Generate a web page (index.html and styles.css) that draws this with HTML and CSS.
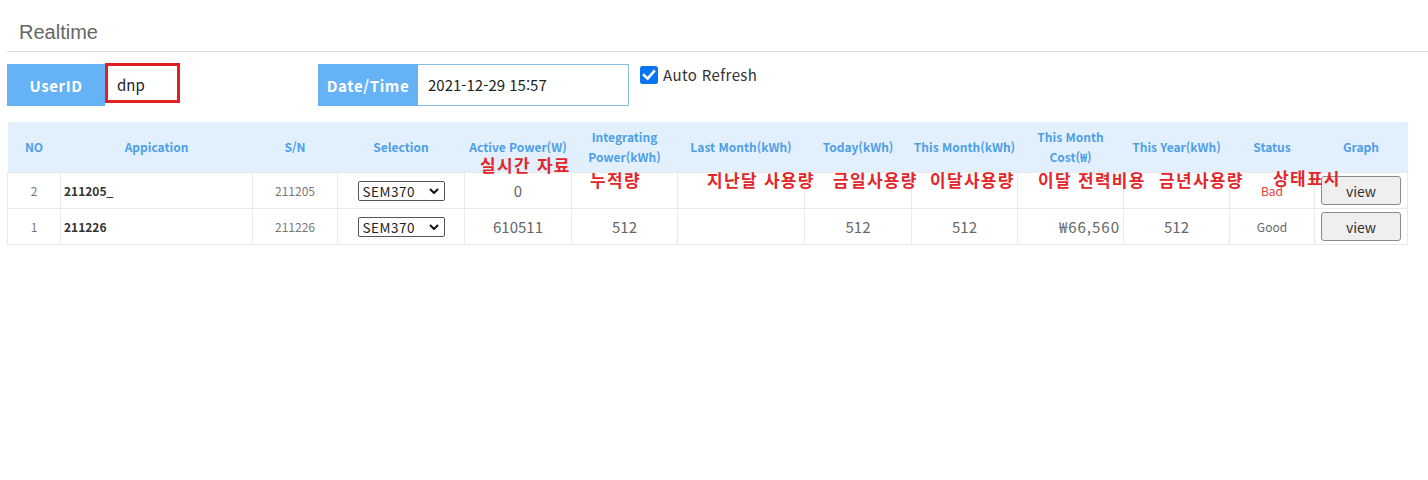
FILE: index.html
```html
<!DOCTYPE html>
<html lang="ko">
<head>
<meta charset="utf-8">
<title>Realtime</title>
<link rel="stylesheet" href="styles.css">
</head>
<body>
<div class="page">
  <h2 class="title">Realtime</h2>
  <div class="toolbar">
    <div class="field">
      <label class="lbl lbl-user">UserID</label>
      <div class="inp inp-user">dnp</div>
      <label class="lbl lbl-date">Date/Time</label>
      <div class="inp inp-date">2021-12-29 15:57</div>
    </div>
    <label class="auto"><span class="chk"><svg viewBox="0 0 18 18" width="18" height="18"><rect x="0" y="0" width="18" height="18" rx="2.5" fill="#0b74f0"/><path d="M4 9.2 L7.6 12.6 L14 5.4" fill="none" stroke="#fff" stroke-width="2.6" stroke-linecap="square"/></svg></span>Auto Refresh</label>
    <div class="mark-box"></div>
  </div>
  <div class="table-wrap">
    <table class="grid">
      <colgroup>
        <col style="width:53px"><col style="width:192px"><col style="width:85px"><col style="width:127px">
        <col style="width:107px"><col style="width:106px"><col style="width:127px"><col style="width:107px">
        <col style="width:106px"><col style="width:106px"><col style="width:106px"><col style="width:85px"><col style="width:93px">
      </colgroup>
      <thead>
        <tr>
          <th>NO</th><th>Appication</th><th>S/N</th><th>Selection</th><th>Active Power(W)</th>
          <th>Integrating<br>Power(kWh)</th><th>Last Month(kWh)</th><th>Today(kWh)</th><th>This Month(kWh)</th>
          <th>This Month<br>Cost(₩)</th><th>This Year(kWh)</th><th>Status</th><th>Graph</th>
        </tr>
      </thead>
      <tbody>
        <tr class="r1">
          <td class="no">2</td><td class="app">211205_</td><td class="sn">211205</td>
          <td class="sel"><span class="select">SEM370<svg viewBox="0 0 10 6" width="10" height="6"><path d="M1 1 L5 5 L9 1" fill="none" stroke="#111" stroke-width="2"/></svg></span></td>
          <td class="num">0</td><td class="num"></td><td class="num"></td><td class="num"></td><td class="num"></td>
          <td class="num cost"></td><td class="num"></td><td class="st bad">Bad</td>
          <td class="gr"><span class="btn">view</span></td>
        </tr>
        <tr class="r2">
          <td class="no">1</td><td class="app">211226</td><td class="sn">211226</td>
          <td class="sel"><span class="select">SEM370<svg viewBox="0 0 10 6" width="10" height="6"><path d="M1 1 L5 5 L9 1" fill="none" stroke="#111" stroke-width="2"/></svg></span></td>
          <td class="num">610511</td><td class="num">512</td><td class="num"></td><td class="num">512</td><td class="num">512</td>
          <td class="num cost">₩66,560</td><td class="num">512</td><td class="st">Good</td>
          <td class="gr"><span class="btn">view</span></td>
        </tr>
      </tbody>
    </table>
    <span class="note n1">실시간 자료</span>
    <span class="note n2">누적량</span>
    <span class="note n3">지난달 사용량</span>
    <span class="note n4">금일사용량</span>
    <span class="note n5">이달사용량</span>
    <span class="note n6">이달 전력비용</span>
    <span class="note n7">금년사용량</span>
    <span class="note n8">상태표시</span>
  </div>
</div>
</body>
</html>
```

FILE: styles.css
```css
html, body {
  margin: 0;
  padding: 0;
  background: #fff;
}
body {
  font-family: "Noto Sans CJK JP", "Noto Sans", sans-serif;
  color: #333;
}
.page {
  padding-left: 7px;
}
.title {
  margin: 0;
  padding: 20px 12px 7px;
  font-family: "Liberation Sans", Arial, sans-serif;
  font-weight: normal;
  font-size: 20px;
  line-height: 24px;
  color: #666;
  border-bottom: 1px solid #ddd;
}
.toolbar {
  position: relative;
  display: flex;
  align-items: flex-start;
  margin-top: 12px;
}
.field {
  display: flex;
  height: 42px;
}
.lbl {
  display: flex;
  align-items: center;
  justify-content: center;
  background: #65b2f7;
  color: #fff;
  font-weight: bold;
  font-size: 15px;
  letter-spacing: 0.6px;
}
.lbl-user { width: 98px; }
.lbl-date { width: 100px; }
.inp {
  display: flex;
  align-items: center;
  background: #fff;
  font-size: 15px;
  color: #222;
  box-sizing: border-box;
}
.inp-user {
  width: 213px;
  padding-left: 12px;
  padding-bottom: 2px;
}
.inp-date {
  width: 211px;
  padding-left: 10px;
  padding-bottom: 2px;
  border: 1px solid #86bde6;
  border-left: none;
}
.auto {
  display: flex;
  align-items: center;
  margin-left: 11px;
  margin-top: 1px;
  font-size: 15px;
  letter-spacing: 0.4px;
  color: #333;
  line-height: 20px;
}
.chk {
  display: flex;
  width: 18px;
  height: 18px;
  margin-right: 5px;
}
.mark-box {
  position: absolute;
  left: 98px;
  top: -1px;
  width: 75px;
  height: 40px;
  border: 3px solid #e31e25;
  box-sizing: border-box;
}
.table-wrap {
  position: relative;
  margin-top: 16px;
  width: 1400px;
}
.grid {
  border-collapse: collapse;
  table-layout: fixed;
  width: 1400px;
}
.grid th {
  background: #e2f0fd;
  color: #4f9fe6;
  font-size: 12px;
  font-weight: bold;
  line-height: 20px;
  height: 50px;
  padding: 0;
  text-align: center;
}
.grid td {
  border: 1px solid #eaeaea;
  height: 35px;
  padding: 0 4px;
  font-size: 12px;
  color: #777;
  text-align: center;
}
.grid td.app {
  text-align: left;
  font-weight: bold;
  color: #333;
  font-size: 12px;
  padding-left: 3px;
}
.grid td.num {
  font-size: 15px;
  color: #666;
}
.grid td.cost {
  text-align: right;
  letter-spacing: 1px;
  padding-right: 3px;
}
.grid td.st {
  color: #666;
}
.grid td.bad {
  color: #e43c3c;
}
.select {
  display: inline-flex;
  align-items: center;
  justify-content: space-between;
  box-sizing: border-box;
  width: 87px;
  height: 20px;
  padding: 0 5px 0 4px;
  border: 1px solid #555;
  border-radius: 2px;
  font-size: 13.5px;
  letter-spacing: 0.5px;
  color: #222;
  vertical-align: middle;
}
.grid td.gr {
  padding: 0 6px;
}
.btn {
  display: flex;
  align-items: center;
  justify-content: center;
  box-sizing: border-box;
  width: 80px;
  height: 29px;
  background: #efefef;
  border: 1px solid #8a8a8a;
  border-radius: 3px;
  font-size: 14px;
  color: #333;
}
.note {
  position: absolute;
  font-family: "Noto Sans CJK KR", sans-serif;
  font-weight: bold;
  font-size: 17px;
  letter-spacing: 1.3px;
  line-height: 20px;
  color: #e3262b;
  white-space: nowrap;
}
.n1 { left: 473px; top: 33px; }
.n2 { left: 583px; top: 48px; }
.n3 { left: 700px; top: 48px; }
.n4 { left: 826px; top: 48px; }
.n5 { left: 923px; top: 48px; }
.n6 { left: 1031px; top: 48px; }
.n7 { left: 1152px; top: 48px; }
.n8 { left: 1266px; top: 46px; }
```
